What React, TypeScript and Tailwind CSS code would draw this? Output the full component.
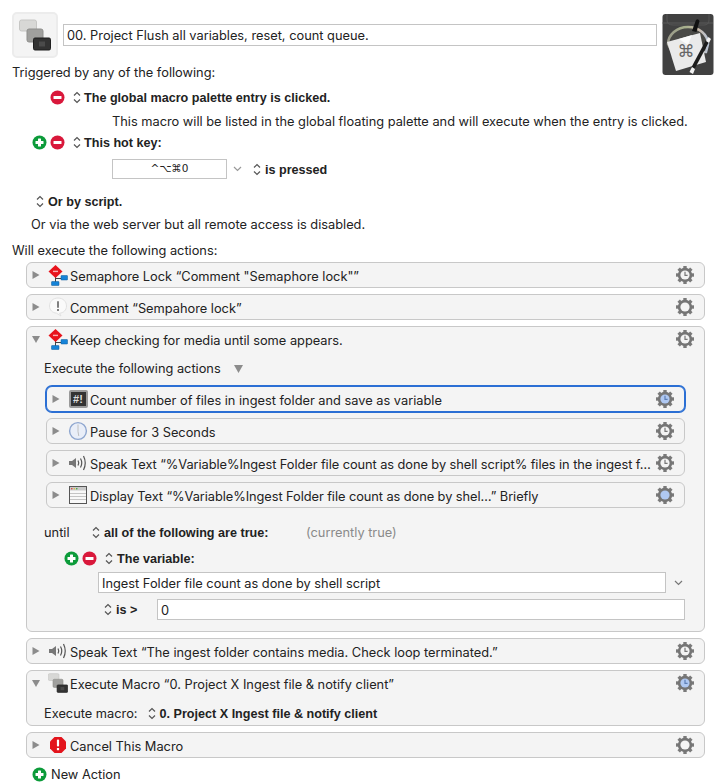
import type { ReactNode } from "react";

function Stepper({ className = "" }: { className?: string }) {
  return (
    <svg width="8" height="13" viewBox="0 0 8 13" className={className} fill="none" stroke="#555" strokeWidth="1.2">
      <path d="M1 4.5 L4 1.5 L7 4.5" />
      <path d="M1 8.5 L4 11.5 L7 8.5" />
    </svg>
  );
}

function B({ children }: { children: ReactNode }) {
  return <span className="inline-block pt-[2px] font-['Liberation_Sans',sans-serif] text-[12.6px] font-bold whitespace-nowrap">{children}</span>;
}

function MinusButton() {
  return (
    <svg width="15" height="15" viewBox="0 0 15 15">
      <circle cx="7.5" cy="7.5" r="7" fill="#d9183b" />
      <rect x="3.5" y="6" width="8" height="3" rx="0.5" fill="#fff" />
    </svg>
  );
}

function PlusButton() {
  return (
    <svg width="15" height="15" viewBox="0 0 15 15">
      <circle cx="7.5" cy="7.5" r="7" fill="#0c9b3a" />
      <rect x="3.5" y="6" width="8" height="3" rx="0.5" fill="#fff" />
      <rect x="6" y="3.5" width="3" height="8" rx="0.5" fill="#fff" />
    </svg>
  );
}

function Triangle({ open }: { open?: boolean }) {
  return (
    <svg width="8" height="8" viewBox="0 0 8 8" fill="#8c8c8c">
      {open ? <path d="M0 1 H8 L4 8 Z" /> : <path d="M0.5 0 L7.5 4 L0.5 8 Z" />}
    </svg>
  );
}

type GearKind = "plain" | "clock" | "blue" | "blueclock";

function Gear({ kind }: { kind: GearKind }) {
  const teeth = [0, 45, 90, 135, 180, 225, 270, 315];
  const blue = kind === "blue" || kind === "blueclock";
  const clock = kind === "clock" || kind === "blueclock";
  return (
    <svg width="20" height="20" viewBox="0 0 20 20" className="shrink-0">
      {teeth.map((a) => (
        <rect key={a} x="8.3" y="1" width="3.4" height="4" fill="#7a7a7a" transform={`rotate(${a} 10 10)`} />
      ))}
      <circle cx="10" cy="10" r="7.2" fill="#757575" />
      <circle cx="10" cy="10" r="4.6" fill={blue ? "#afc8f2" : "#f4f4f4"} />
      {clock && <path d="M10 6.8 V10.3 H12.6" fill="none" stroke={blue ? "#5d7fb5" : "#777"} strokeWidth="1.2" />}
    </svg>
  );
}

function SemaphoreIcon() {
  return (
    <svg width="20" height="21" viewBox="0 0 20 21">
      <path d="M7.5 11 V17 M7.5 13.5 H14" stroke="#444" strokeWidth="1" fill="none" />
      <path d="M7.5 0 L14.5 6.5 L7.5 13 L0.5 6.5 Z" fill="#e8141c" />
      <rect x="5" y="5.7" width="5" height="1.4" fill="#f7b0b0" />
      <rect x="13" y="10.5" width="6.5" height="4.5" rx="0.5" fill="#1583d8" stroke="#0d5a99" strokeWidth="0.5" />
      <rect x="3.5" y="16.5" width="7.5" height="4" rx="0.5" fill="#1583d8" stroke="#0d5a99" strokeWidth="0.5" />
    </svg>
  );
}

function CommentIcon() {
  return (
    <svg width="20" height="20" viewBox="0 0 20 20">
      <path d="M10 1 C15 1 18.5 4.5 18.5 9 C18.5 13 15.5 16 11.5 16.2 L13 19 L8.5 16.2 C4.5 15.8 1.5 13 1.5 9 C1.5 4.5 5 1 10 1 Z" fill="#fafafa" stroke="#e2e2e2" />
      <rect x="9" y="4" width="2" height="7" rx="1" fill="#808080" />
      <rect x="9" y="12" width="2" height="2" fill="#808080" />
    </svg>
  );
}

function TerminalIcon() {
  return (
    <div className="flex h-[18px] w-[19px] items-center justify-center rounded-[2px] border-2 border-[#9a9a9a] bg-[#333] font-['Liberation_Sans',sans-serif] text-[11px] leading-none font-bold text-[#ddd]">
      #!
    </div>
  );
}

function ClockIcon() {
  return (
    <svg width="20" height="20" viewBox="0 0 20 20">
      <circle cx="10" cy="10" r="8.4" fill="#e9eef8" stroke="#8ea6cf" strokeWidth="1.4" />
      <path d="M10 3.5 V10.5 M10 10.5 L10.8 15" stroke="#b9b9b9" strokeWidth="0.9" fill="none" />
    </svg>
  );
}

function SpeakerIcon() {
  return (
    <svg width="20" height="18" viewBox="0 0 20 18" fill="none">
      <path d="M1 7 H4 L8 4 V14 L4 11 H1 Z" fill="#777" />
      <path d="M10 6.5 Q11.5 9 10 11.5" stroke="#555" strokeWidth="1.2" />
      <path d="M12.5 4.5 Q15 9 12.5 13.5" stroke="#555" strokeWidth="1.2" />
      <path d="M15.5 2 Q19 9 15.5 16" stroke="#555" strokeWidth="1.2" />
    </svg>
  );
}

function WindowIcon() {
  return (
    <svg width="20" height="20" viewBox="0 0 20 20">
      <rect x="1.5" y="1.5" width="17" height="17" fill="#f8f8f8" stroke="#555" />
      <rect x="2" y="2" width="16" height="3.5" fill="#c9c9c9" />
      <circle cx="3.8" cy="3.7" r="0.8" fill="#d33" />
      <circle cx="6.3" cy="3.7" r="0.8" fill="#db3" />
      <circle cx="8.8" cy="3.7" r="0.8" fill="#3a3" />
      <path d="M2 8.5 H18 M2 11.5 H18 M2 14.5 H18" stroke="#c4c4c4" />
    </svg>
  );
}

function StackIcon({ size }: { size: number }) {
  return (
    <svg width={size} height={size} viewBox="0 0 32 32">
      <rect x="0.5" y="1" width="17" height="11" rx="2" fill="#d8d8d6" stroke="#c6c6c4" />
      <rect x="8" y="10" width="16" height="13" rx="2" fill="#a0a09e" stroke="#8e8e8c" />
      <rect x="14.5" y="19" width="17" height="12" rx="1.5" fill="#333" stroke="#1f1f1f" />
      <rect x="20" y="22.5" width="6" height="5" fill="#4b4b4b" />
    </svg>
  );
}

function CancelIcon() {
  return (
    <svg width="18" height="18" viewBox="0 0 18 18">
      <path d="M5.5 1 H12.5 L17 5.5 V12.5 L12.5 17 H5.5 L1 12.5 V5.5 Z" fill="#e3141c" />
      <rect x="7.9" y="3.5" width="2.2" height="7" rx="1" fill="#fff" />
      <rect x="7.9" y="12" width="2.2" height="2.2" fill="#fff" />
    </svg>
  );
}

function AppIcon() {
  return (
    <svg width="52" height="62" viewBox="0 0 52 62" className="shrink-0">
      <defs>
        <linearGradient id="rim" x1="0" y1="0" x2="1" y2="0">
          <stop offset="0" stopColor="#9a9a8a" />
          <stop offset="0.45" stopColor="#a7b08c" />
          <stop offset="0.75" stopColor="#c9b9a8" />
          <stop offset="1" stopColor="#b9c4d4" />
        </linearGradient>
      </defs>
      <rect x="0.5" y="0" width="51" height="61" rx="3" fill="#414141" />
      <path d="M5 0 V6 Q5 11 11 11 H42 Q47 11 47 6 V0" fill="none" stroke="#555" />
      <path d="M0.5 9 H51" stroke="#5a5a5a" />
      <path d="M6 30 A20 17 0 0 1 46 30 L44 38 L10 38 Z" fill="#4a4a47" stroke="url(#rim)" strokeWidth="2.5" />
      <path d="M30 17 L34 6 Q36 4 37.5 7 L34.5 18 Z" fill="#111" />
      <path d="M5 28 L38 19 L44 48 L14 57 Z" fill="#eaeaea" />
      <path d="M17 25 L30 21 L26 31 Z" fill="#fbfbfb" />
      <path d="M29 54 L44 26 L47 28 L32 56 Z" fill="#1c1c1c" />
      <path d="M44 27 L46.5 23 L49 25 L47 29 Z" fill="#f2f2f2" />
      <path d="M27.5 58 L30 53 L33 55 L31 60 Z" fill="#f2f2f2" />
      <text x="24" y="43" textAnchor="middle" fontSize="17" fill="#666" fontFamily="DejaVu Sans">⌘</text>
    </svg>
  );
}

function ActionCard({
  title,
  icon,
  gear,
  open,
  focused,
  tight,
  children,
}: {
  title: string;
  icon: ReactNode;
  gear: GearKind;
  open?: boolean;
  focused?: boolean;
  tight?: boolean;
  children?: ReactNode;
}) {
  return (
    <div
      className={
        focused
          ? "rounded-[6px] border border-[#2b6fd4] bg-[#f4f4f4] shadow-[0_0_0_1px_#2b6fd4]"
          : "rounded-[6px] border border-[#c8c8c8] bg-[#f4f4f4]"
      }
    >
      <div className="flex h-[24px] items-center">
        <div className="ml-[5px] flex w-[8px] justify-center">
          <Triangle open={open} />
        </div>
        <div className="ml-[8px] flex w-[20px] justify-center">{icon}</div>
        <span className={tight ? "ml-[2px] min-w-0 flex-1 pt-[4px] tracking-[-0.06px] whitespace-nowrap" : "ml-[2px] min-w-0 flex-1 pt-[4px] whitespace-nowrap"}>{title}</span>
        <div className="mr-[9px]">
          <Gear kind={gear} />
        </div>
      </div>
      {children}
    </div>
  );
}

export default function App() {
  return (
    <div className="h-[784px] w-[718px] overflow-hidden bg-white font-['Inter',sans-serif] text-[12.8px] text-[#222]">
      <div className="flex h-[62px] items-start pt-[12px] pl-[12px]">
        <div className="flex h-[46px] w-[46px] items-center justify-center rounded-[5px] border-2 border-[#ececec] bg-[#f4f4f4]">
          <StackIcon size={32} />
        </div>
        <div className="mt-[12px] ml-[5px] flex h-[22px] w-[594px] items-center border border-[#c4c4c4] pt-[2px] pl-[3px]">
          00. Project Flush all variables, reset, count queue.
        </div>
        <div className="mt-[2px] ml-[5px]">
          <AppIcon />
        </div>
      </div>

      <div className="flex h-[20px] items-center pt-[2px] pl-[12px]">Triggered by any of the following:</div>

      <div className="mt-[5px] flex h-[20px] items-center pl-[50px]">
        <MinusButton />
        <Stepper className="mr-[3px] ml-[8px]" />
        <B>The global macro palette entry is clicked.</B>
      </div>
      <div className="mt-[4px] flex h-[20px] items-center pt-[2px] pl-[112px]">
        This macro will be listed in the global floating palette and will execute when the entry is clicked.
      </div>
      <div className="mt-[1px] flex h-[20px] items-center pl-[32px]">
        <PlusButton />
        <span className="ml-[3px]">
          <MinusButton />
        </span>
        <Stepper className="mr-[3px] ml-[8px]" />
        <B>This hot key:</B>
      </div>
      <div className="mt-[7px] flex h-[20px] items-center pl-[112px]">
        <div className="flex h-[20px] w-[115px] items-center justify-center border border-[#c4c4c4] font-['DejaVu_Sans',sans-serif] text-[10.5px]">
          ^⌥⌘0
        </div>
        <svg width="9" height="6" viewBox="0 0 9 6" className="ml-[6px]" fill="none" stroke="#999" strokeWidth="1.2">
          <path d="M1 1 L4.5 4.5 L8 1" />
        </svg>
        <Stepper className="mr-[4px] ml-[11px]" />
        <B>is pressed</B>
      </div>
      <div className="mt-[12px] flex h-[20px] items-center pl-[36px]">
        <Stepper className="mr-[4px]" />
        <B>Or by script.</B>
      </div>
      <div className="mt-[3px] flex h-[20px] items-center pt-[2px] pl-[31px]">Or via the web server but all remote access is disabled.</div>
      <div className="mt-[5px] flex h-[20px] items-center pt-[3px] pl-[12px]">Will execute the following actions:</div>

      <div className="mx-[26px] mt-[3px] flex w-[679px] flex-col gap-[6px]">
        <ActionCard title="Semaphore Lock “Comment &quot;Semaphore lock&quot;”" icon={<SemaphoreIcon />} gear="clock" />
        <ActionCard title="Comment “Sempahore lock”" icon={<CommentIcon />} gear="plain" />
        <ActionCard title="Keep checking for media until some appears." icon={<SemaphoreIcon />} gear="clock" open>
          <div className="flex h-[35px] items-center pt-px pl-[17px]">
            Execute the following actions
            <svg width="9" height="8" viewBox="0 0 9 8" fill="#8c8c8c" className="ml-[13px]">
              <path d="M0 0 H9 L4.5 8 Z" />
            </svg>
          </div>
          <div className="mx-[19px] flex flex-col gap-[6px]">
            <ActionCard title="Count number of files in ingest folder and save as variable" icon={<TerminalIcon />} gear="blueclock" focused />
            <ActionCard title="Pause for 3 Seconds" icon={<ClockIcon />} gear="clock" />
            <ActionCard title="Speak Text “%Variable%Ingest Folder file count as done by shell script% files in the ingest f…" icon={<SpeakerIcon />} gear="clock" tight />
            <ActionCard title="Display Text “%Variable%Ingest Folder file count as done by shel…” Briefly" icon={<WindowIcon />} gear="blue" tight />
          </div>
          <div className="mt-[14px] flex h-[20px] items-center pl-[17px]">
            <span className="w-[47px] pt-[2px]">until</span>
            <Stepper className="mr-[4px] ml-[1px]" />
            <span className="w-[202px]">
              <B>all of the following are true:</B>
            </span>
            <span className="pt-[2px] text-[#8a8a8a]">(currently true)</span>
          </div>
          <div className="mt-[6px] flex h-[20px] items-center pl-[37px]">
            <PlusButton />
            <span className="ml-[3px]">
              <MinusButton />
            </span>
            <Stepper className="mr-[4px] ml-[8px]" />
            <B>The variable:</B>
          </div>
          <div className="mt-[4px] flex h-[21px] items-center pl-[71px]">
            <div className="flex h-[21px] w-[568px] items-center border border-[#c4c4c4] bg-white pt-[2px] pl-[3px]">
              Ingest Folder file count as done by shell script
            </div>
            <svg width="9" height="6" viewBox="0 0 9 6" className="ml-[8px]" fill="none" stroke="#777" strokeWidth="1.2">
              <path d="M1 1 L4.5 4.5 L8 1" />
            </svg>
          </div>
          <div className="mt-[6px] flex h-[21px] items-center pl-[77px]">
            <Stepper className="mr-[4px]" />
            <span className="w-[41px]">
              <B>is &gt;</B>
            </span>
            <div className="flex h-[21px] w-[528px] items-center border border-[#c4c4c4] bg-white pt-[2px] pl-[3px]">0</div>
          </div>
          <div className="h-[11px]" />
        </ActionCard>
        <ActionCard title="Speak Text “The ingest folder contains media. Check loop terminated.”" icon={<SpeakerIcon />} gear="clock" />
        <ActionCard title="Execute Macro “0. Project X Ingest file & notify client”" icon={<StackIcon size={20} />} gear="blueclock" open>
          <div className="flex h-[30px] items-center pt-[7px] pl-[17px]">
            Execute macro:
            <Stepper className="mr-[4px] ml-[10px]" />
            <B>0. Project X Ingest file &amp; notify client</B>
          </div>
        </ActionCard>
        <ActionCard title="Cancel This Macro" icon={<CancelIcon />} gear="plain" />
      </div>

      <div className="mt-[6px] flex h-[20px] items-center pl-[32px]">
        <PlusButton />
        <span className="ml-[4px] pt-[2px]">New Action</span>
      </div>
    </div>
  );
}
